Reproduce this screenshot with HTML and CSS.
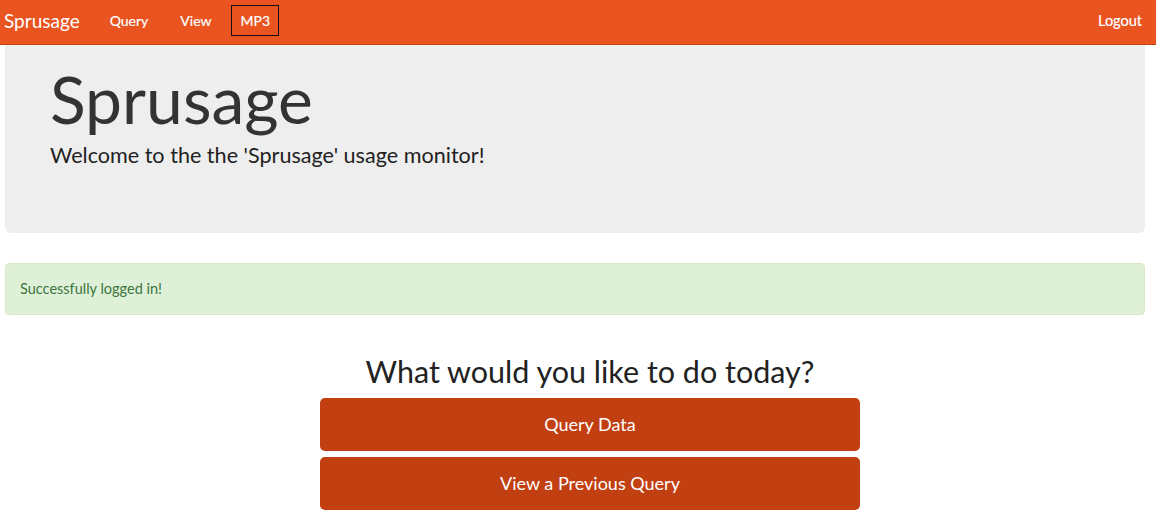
FILE: index.html
```html
<!DOCTYPE html>
<html>
<head>
<meta charset="utf-8">
<title>Sprusage</title>
<link rel="stylesheet" href="styles.css">
</head>
<body>
<nav class="navbar">
  <a class="brand" href="#">Sprusage</a>
  <ul class="nav">
    <li><a href="#">Query</a></li>
    <li><a href="#">View</a></li>
    <li><a class="boxed" href="#">MP3</a></li>
  </ul>
  <ul class="nav nav-right">
    <li><a href="#">Logout</a></li>
  </ul>
</nav>
<main class="page">
  <section class="jumbotron">
    <h1>Sprusage</h1>
    <p>Welcome to the the 'Sprusage' usage monitor!</p>
  </section>
  <div class="alert">Successfully logged in!</div>
  <section class="actions">
    <h2>What would you like to do today?</h2>
    <a class="btn" href="#">Query Data</a>
    <a class="btn" href="#">View a Previous Query</a>
  </section>
</main>
</body>
</html>
```

FILE: styles.css
```css
* { box-sizing: border-box; }
html, body { margin: 0; padding: 0; }
body {
  font-family: Lato, "Open Sans", sans-serif;
  font-size: 14px;
  color: #333;
  background: #fff;
  overflow: hidden;
}
a { text-decoration: none; }

.navbar {
  height: 45px;
  background: #e95420;
  border-bottom: 1px solid #c34113;
  display: flex;
  align-items: flex-start;
  padding: 5px 13px 0 4px;
}
.brand {
  color: #fff;
  font-size: 19px;
  line-height: 31px;
  margin-right: 14px;
}
.nav {
  list-style: none;
  margin: 0;
  padding: 0;
  display: flex;
  align-items: center;
}
.nav li a {
  color: #fff;
  font-size: 14px;
  display: block;
  padding: 0 15px;
  line-height: 29px;
  border: 1px solid transparent;
  -webkit-text-stroke: 0.2px #fff;
}
.nav li a.boxed {
  border-color: #111;
  padding: 0 8px;
  margin-left: 4px;
}
.nav-right { margin-left: auto; }
.nav-right li a { padding: 0; font-size: 14.5px; }

.page { padding: 0 11px 0 5px; }

.jumbotron {
  background: #eeeeee;
  border-radius: 0 0 6px 6px;
  padding: 18px 45px 48px;
  height: 188px;
}
.jumbotron h1 {
  margin: 0;
  font-size: 66px;
  font-weight: 400;
  line-height: 1.1;
  color: #333;
}
.jumbotron p {
  margin: 6px 0 0;
  font-size: 21.6px;
  font-weight: 400;
  color: #222;
}

.alert {
  margin-top: 30px;
  background: #dff0d8;
  border: 1px solid #d6e9c6;
  color: #3c763d;
  border-radius: 4px;
  padding: 15px 14px;
  height: 52px;
  line-height: 20px;
  font-size: 14.5px;
}

.actions {
  width: 540px;
  margin: 38px 0 0 315px;
  display: flex;
  flex-direction: column;
  gap: 6px;
}
.actions h2 {
  margin: 0 0 3px;
  text-align: center;
  font-size: 30.5px;
  font-weight: 400;
  line-height: 36px;
  color: #222;
}
.btn {
  display: block;
  height: 53px;
  line-height: 53px;
  background: #c13f11;
  color: #fff;
  border-radius: 5px;
  text-align: center;
  font-size: 18px;
}
```
